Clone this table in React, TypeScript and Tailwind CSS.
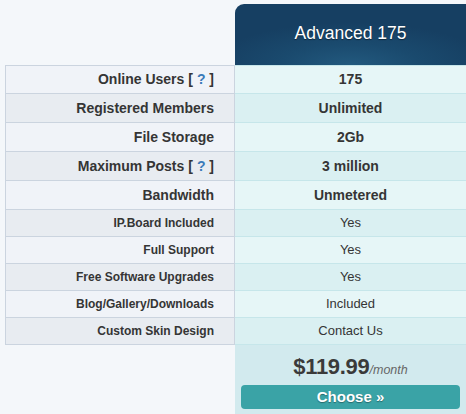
import React from "react";

type Row = { label: string; help?: boolean; value: string; big: boolean };

const ROWS: Row[] = [
  { label: "Online Users", help: true, value: "175", big: true },
  { label: "Registered Members", value: "Unlimited", big: true },
  { label: "File Storage", value: "2Gb", big: true },
  { label: "Maximum Posts", help: true, value: "3 million", big: true },
  { label: "Bandwidth", value: "Unmetered", big: true },
  { label: "IP.Board Included", value: "Yes", big: false },
  { label: "Full Support", value: "Yes", big: false },
  { label: "Free Software Upgrades", value: "Yes", big: false },
  { label: "Blog/Gallery/Downloads", value: "Included", big: false },
  { label: "Custom Skin Design", value: "Contact Us", big: false },
];

export default function App() {
  return (
    <div
      className="w-[466px] h-[414px] overflow-hidden bg-[#f4f7fa] text-[#353535]"
      style={{ fontFamily: '"Liberation Sans", Arial, sans-serif' }}
    >
      <div className="pt-[4px] pl-[5px] flex flex-col">
        {/* Header */}
        <div className="flex">
          <div className="w-[230px] shrink-0" />
          <div
            className="w-[231px] h-[61px] rounded-tl-[9px] flex items-center justify-center text-white text-[17.5px] [text-shadow:0_1px_1px_rgba(0,0,0,0.45)]"
            style={{
              background:
                "radial-gradient(ellipse 60% 70% at 50% 100%, #22597e 0%, #1a4a6e 50%, #163f62 100%)",
            }}
          >
            <span className="-mt-[2px]">Advanced 175</span>
          </div>
        </div>

        {/* Rows */}
        {ROWS.map((row, i) => {
          const odd = i % 2 === 0;
          return (
            <div key={row.label} className={`flex ${row.big ? "h-[29px]" : "h-[27px]"}`}>
              <div
                className={`w-[230px] shrink-0 border-l border-b border-r border-[#cbd4df] ${
                  i === 0 ? "border-t" : ""
                } ${odd ? "bg-[#f0f3f8]" : "bg-[#e8ecf1]"} flex items-center justify-end pr-[20px] font-bold ${
                  row.big ? "text-[14px]" : "text-[12px]"
                }`}
              >
                {row.label}
                {row.help && (
                  <span className="ml-[4px]">
                    [ <span className="text-[#3b7ab8]">?</span> ]
                  </span>
                )}
              </div>
              <div
                className={`w-[231px] border-b border-[#c6e6ea] ${
                  i === 0 ? "border-t border-t-[#c6e6ea]" : ""
                } ${odd ? "bg-[#e6f6f7]" : "bg-[#daf0f2]"} flex items-center justify-center ${
                  row.big ? "text-[14px] font-bold" : "text-[13px]"
                }`}
              >
                {row.value}
              </div>
            </div>
          );
        })}

        {/* Price + button */}
        <div className="flex">
          <div className="w-[230px] shrink-0" />
          <div className="w-[231px] h-[70px] bg-[#d2eaee] flex flex-col items-center px-[6px]">
            <div className="mt-[5px] h-[30px] flex items-baseline">
              <span className="text-[22px] font-bold text-[#3a3a3a] tracking-[-0.3px]">$119.99</span>
              <span className="text-[12.5px] italic text-[#666]">/month</span>
            </div>
            <button className="mt-[5px] w-full h-[24px] rounded-[4px] bg-[#3aa3a6] text-white font-bold text-[15px] flex items-center justify-center [text-shadow:0_1px_1px_rgba(0,0,0,0.35)]">
              Choose »
            </button>
          </div>
        </div>
      </div>
    </div>
  );
}
